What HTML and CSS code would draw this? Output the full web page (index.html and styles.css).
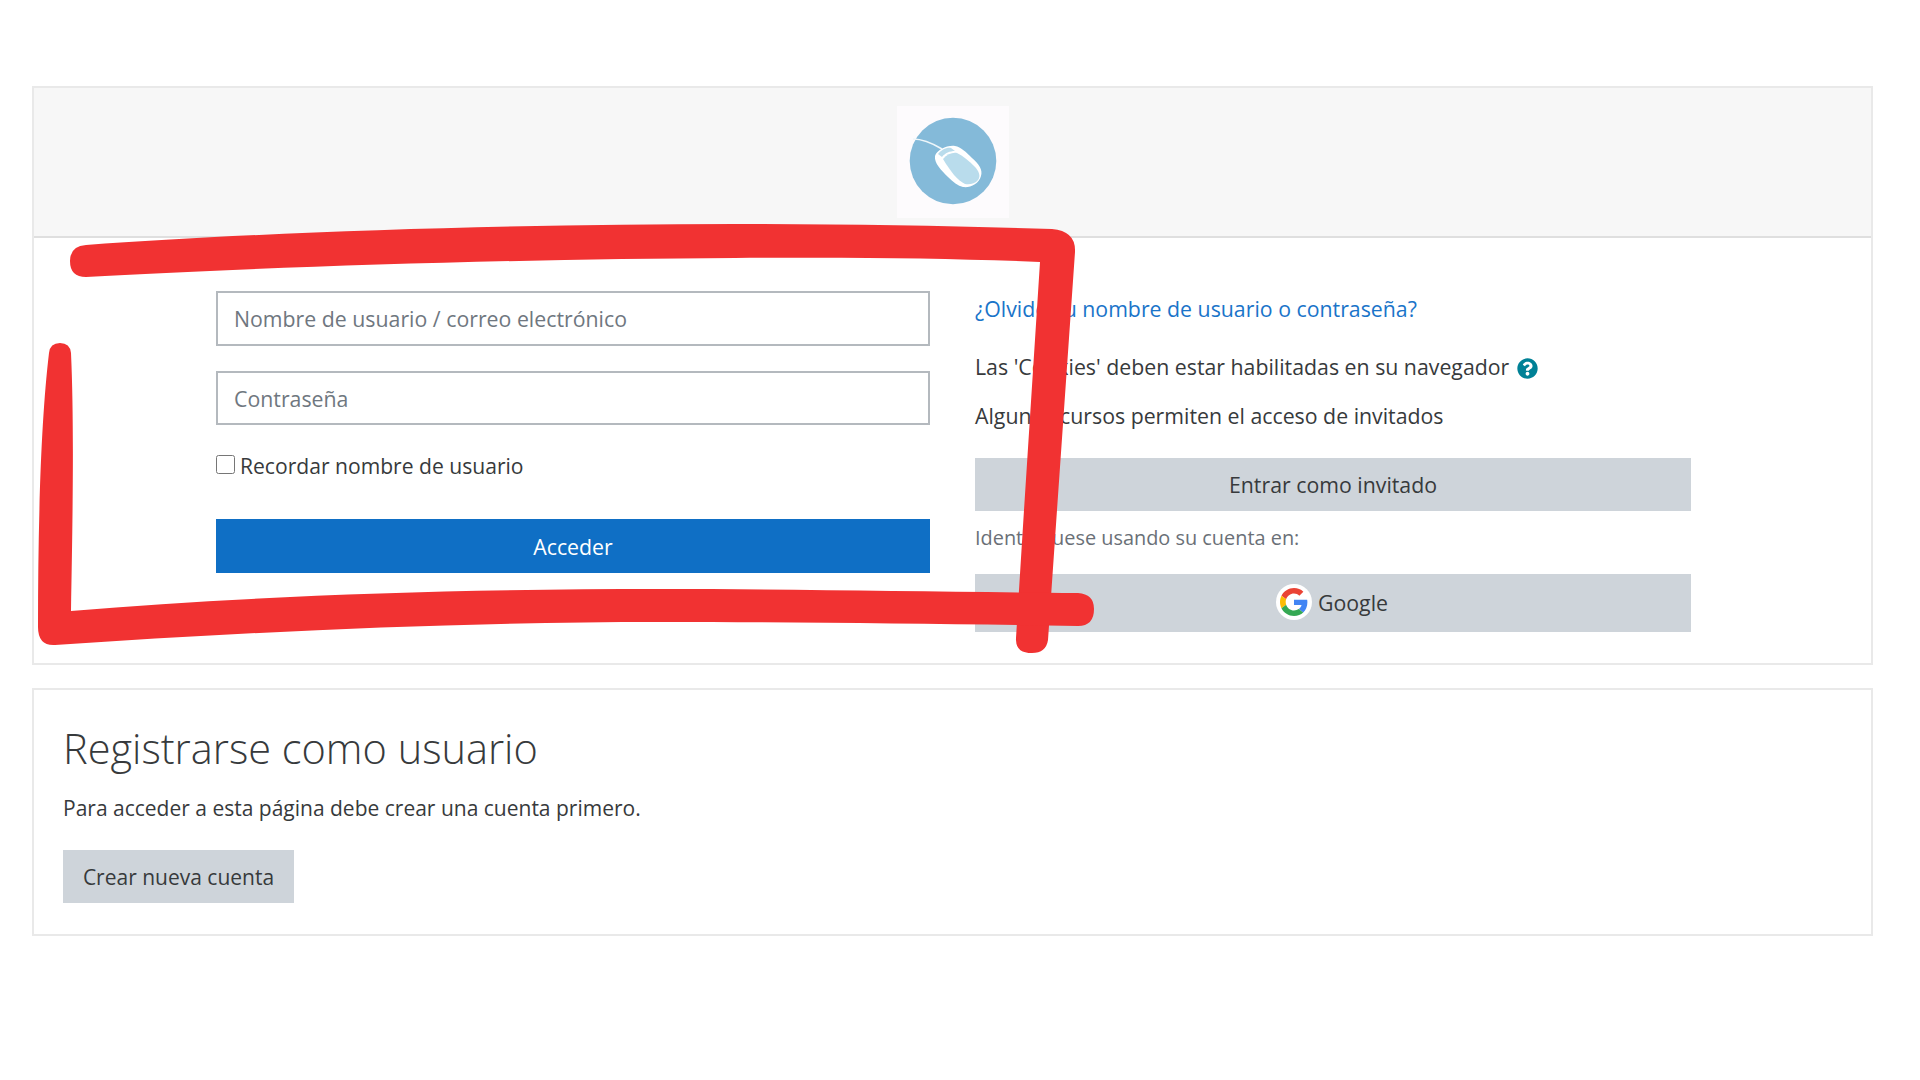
FILE: index.html
```html
<!DOCTYPE html>
<html lang="es">
<head>
<meta charset="utf-8">
<title>Acceder</title>
<link rel="stylesheet" href="styles.css">
</head>
<body>
<main class="page">
  <section class="card login">
    <header class="card-head">
      <div class="logo">
        <svg viewBox="0 0 112 112" width="112" height="112">
          <circle cx="56" cy="55" r="43.3" fill="#84bad9"/>
          <path d="M16 33C26 33 35 37 45 43" fill="none" stroke="#eef6fa" stroke-width="1.6"/>
          <path d="M38 50C40 44 50 39 58 40C64 41 69 46 75 52C82 58 86 64 84 70C82 78 73 82 66 81C61 80 56 76 51 71C44 64 37 57 38 50Z" fill="#fff"/>
          <path d="M46 53C50 48 56 46 60 47C66 50 72 55 77 60C82 65 84 70 81 74C78 78 72 79 68 78C60 74 54 66 46 53Z" fill="#b9dcec"/>
          <path d="M41 48C44 44 50 41 54 42L58 45C53 45 48 47 45 51Z" fill="#b9dcec"/>
        </svg>
      </div>
    </header>
    <div class="login-body">
      <form class="login-form">
        <input class="field" type="text" placeholder="Nombre de usuario / correo electrónico">
        <input class="field" type="password" placeholder="Contraseña">
        <label class="remember"><input class="check" type="checkbox"><span>Recordar nombre de usuario</span></label>
        <button class="btn btn-primary" type="button">Acceder</button>
      </form>
      <div class="login-side">
        <a class="forgot" href="#">¿Olvidó su nombre de usuario o contraseña?</a>
        <p class="cookies">Las 'Cookies' deben estar habilitadas en su navegador
          <svg class="help" viewBox="0 0 512 512" width="21" height="21"><path fill="#008196" d="M504 256c0 136.997-111.043 248-248 248S8 392.997 8 256C8 119.083 119.043 8 256 8s248 111.083 248 248zM262.655 90c-54.497 0-89.255 22.957-116.549 63.758-3.536 5.286-2.353 12.415 2.715 16.258l34.699 26.31c5.205 3.947 12.621 3.008 16.665-2.122 17.864-22.658 30.113-35.797 57.303-35.797 20.429 0 45.698 13.148 45.698 32.958 0 14.976-12.363 22.667-32.534 33.976C247.128 238.528 216 254.941 216 296v4c0 6.627 5.373 12 12 12h56c6.627 0 12-5.373 12-12v-1.333c0-28.462 83.186-29.647 83.186-106.667 0-58.002-60.165-102-116.531-102zM256 338c-25.365 0-46 20.635-46 46 0 25.364 20.635 46 46 46s46-20.636 46-46c0-25.365-20.635-46-46-46z"/></svg>
        </p>
        <p class="guests">Algunos cursos permiten el acceso de invitados</p>
        <button class="btn btn-grey btn-guest" type="button">Entrar como invitado</button>
        <p class="identity">Identifíquese usando su cuenta en:</p>
        <button class="btn btn-grey btn-google" type="button">
          <svg class="g-logo" viewBox="0 0 36 36" width="36" height="36">
            <circle cx="18" cy="18" r="18" fill="#fff"/>
            <g transform="translate(4 4) scale(.583)">
              <path fill="#EA4335" d="M24 9.5c3.54 0 6.71 1.22 9.21 3.6l6.85-6.85C35.9 2.38 30.47 0 24 0 14.62 0 6.51 5.38 2.56 13.22l7.98 6.19C12.43 13.72 17.74 9.5 24 9.5z"/>
              <path fill="#4285F4" d="M46.98 24.55c0-1.57-.15-3.09-.38-4.55H24v9.02h12.94c-.58 2.96-2.26 5.48-4.78 7.18l7.73 6c4.51-4.18 7.09-10.36 7.09-17.65z"/>
              <path fill="#FBBC05" d="M10.53 28.59c-.48-1.45-.76-2.99-.76-4.59s.27-3.14.76-4.59l-7.98-6.19C.92 16.46 0 20.12 0 24c0 3.88.92 7.54 2.56 10.78l7.97-6.19z"/>
              <path fill="#34A853" d="M24 48c6.48 0 11.93-2.13 15.89-5.81l-7.73-6c-2.15 1.45-4.92 2.3-8.16 2.3-6.26 0-11.57-4.22-13.47-9.91l-7.98 6.19C6.51 42.62 14.62 48 24 48z"/>
            </g>
          </svg>
          <span>Google</span>
        </button>
      </div>
    </div>
  </section>
  <section class="card signup">
    <h2 class="signup-title">Registrarse como usuario</h2>
    <p class="signup-text">Para acceder a esta página debe crear una cuenta primero.</p>
    <button class="btn btn-grey btn-new" type="button">Crear nueva cuenta</button>
  </section>
</main>
<svg class="scribble" viewBox="0 0 1920 1080" width="1920" height="1080" aria-hidden="true">
  <path d="M86 245C250 233 500 224 735 224C850 224 960 226 1052 229Q1076 231 1075 252L1057 510L1048 640Q1046 653 1032 653Q1015 653 1016 638L1024 510L1040 262C950 258 850 257 735 258C500 259 250 268 86 277Q70 277 70 261Q70 246 86 245Z"/>
  <path d="M49 353Q50 343 60 343Q70 343 71 353C74 420 73 500 71 611C250 596 450 589 660 589C800 589 950 592 1078 593Q1094 594 1094 609Q1094 626 1078 626C950 624 800 622 660 622C450 622 250 632 55 645Q38 646 38 627C38 520 41 420 49 353Z"/>
</svg>
</body>
</html>
```
FILE: styles.css
```css
* { box-sizing: border-box; }
html, body { margin: 0; padding: 0; background: #fff; }
body {
  font-family: "Open Sans", "Noto Sans", sans-serif;
  font-size: 21.3px;
  color: #373a3c;
  height: 1080px;
  overflow: hidden;
  position: relative;
}
p { margin: 0; }
.page { padding: 86px 47px 0 32px; display: flex; flex-direction: column; gap: 23px; }
.card { border: 2px solid #e9e9e9; background: #fff; }
.card-head {
  height: 150px;
  background: #f7f7f7;
  border-bottom: 2px solid #dfdfdf;
  display: flex;
  justify-content: center;
  align-items: center;
}
.logo { width: 112px; height: 112px; background: #fdfbfd; }
.logo svg { display: block; }
.login-body { display: flex; gap: 45px; padding: 53px 0 30px 182px; height: 425px; }
.login-form { width: 714px; display: flex; flex-direction: column; }
.field {
  height: 55px;
  border: 2px solid #b4b9be;
  background: #fff;
  padding: 0 16px;
  font: inherit;
  margin-bottom: 25px;
  outline: none;
}
.field + .field { height: 54px; margin-bottom: 30px; }
.field::placeholder { color: #6f7780; opacity: 1; }
.remember { display: flex; align-items: center; gap: 5px; height: 20px; margin-bottom: 44px; font-size: 21.1px; }
.check { width: 19px; height: 19px; margin: -2px 0 0; }
.btn { border: 0; font: inherit; color: #373a3c; padding: 0; display: flex; align-items: center; justify-content: center; }
.btn-primary { height: 54px; background: #0f6fc5; color: #fff; }
.login-side { width: 716px; display: flex; flex-direction: column; }
.forgot { color: #1a74c9; text-decoration: none; height: 27px; line-height: 27px; margin-top: 4px; margin-bottom: 31px; }
.cookies { height: 27px; line-height: 27px; margin-bottom: 22px; display: flex; align-items: center; gap: 8px; }
.help { flex: none; margin-top: 3px; }
.guests { height: 27px; line-height: 27px; margin-bottom: 29px; }
.btn-grey { background: #ced4da; }
.btn-guest { height: 53px; margin-bottom: 13px; }
.identity { color: #6a7077; height: 27px; line-height: 27px; font-size: 19.9px; margin-bottom: 23px; }
.btn-google { height: 58px; gap: 6px; padding: 0 2px 2px 0; }
.g-logo { flex: none; }
.signup { height: 248px; padding: 31px 0 0 29px; }
.signup-title { margin: 0 0 20px; font-size: 41.5px; line-height: 54px; font-weight: 300; }
.signup-text { height: 27px; line-height: 27px; margin-bottom: 28px; font-size: 21px; }
.btn-new { width: 231px; height: 53px; font-size: 21px; }
.scribble { position: absolute; left: 0; top: 0; pointer-events: none; }
.scribble path { fill: #f13232; }
```
